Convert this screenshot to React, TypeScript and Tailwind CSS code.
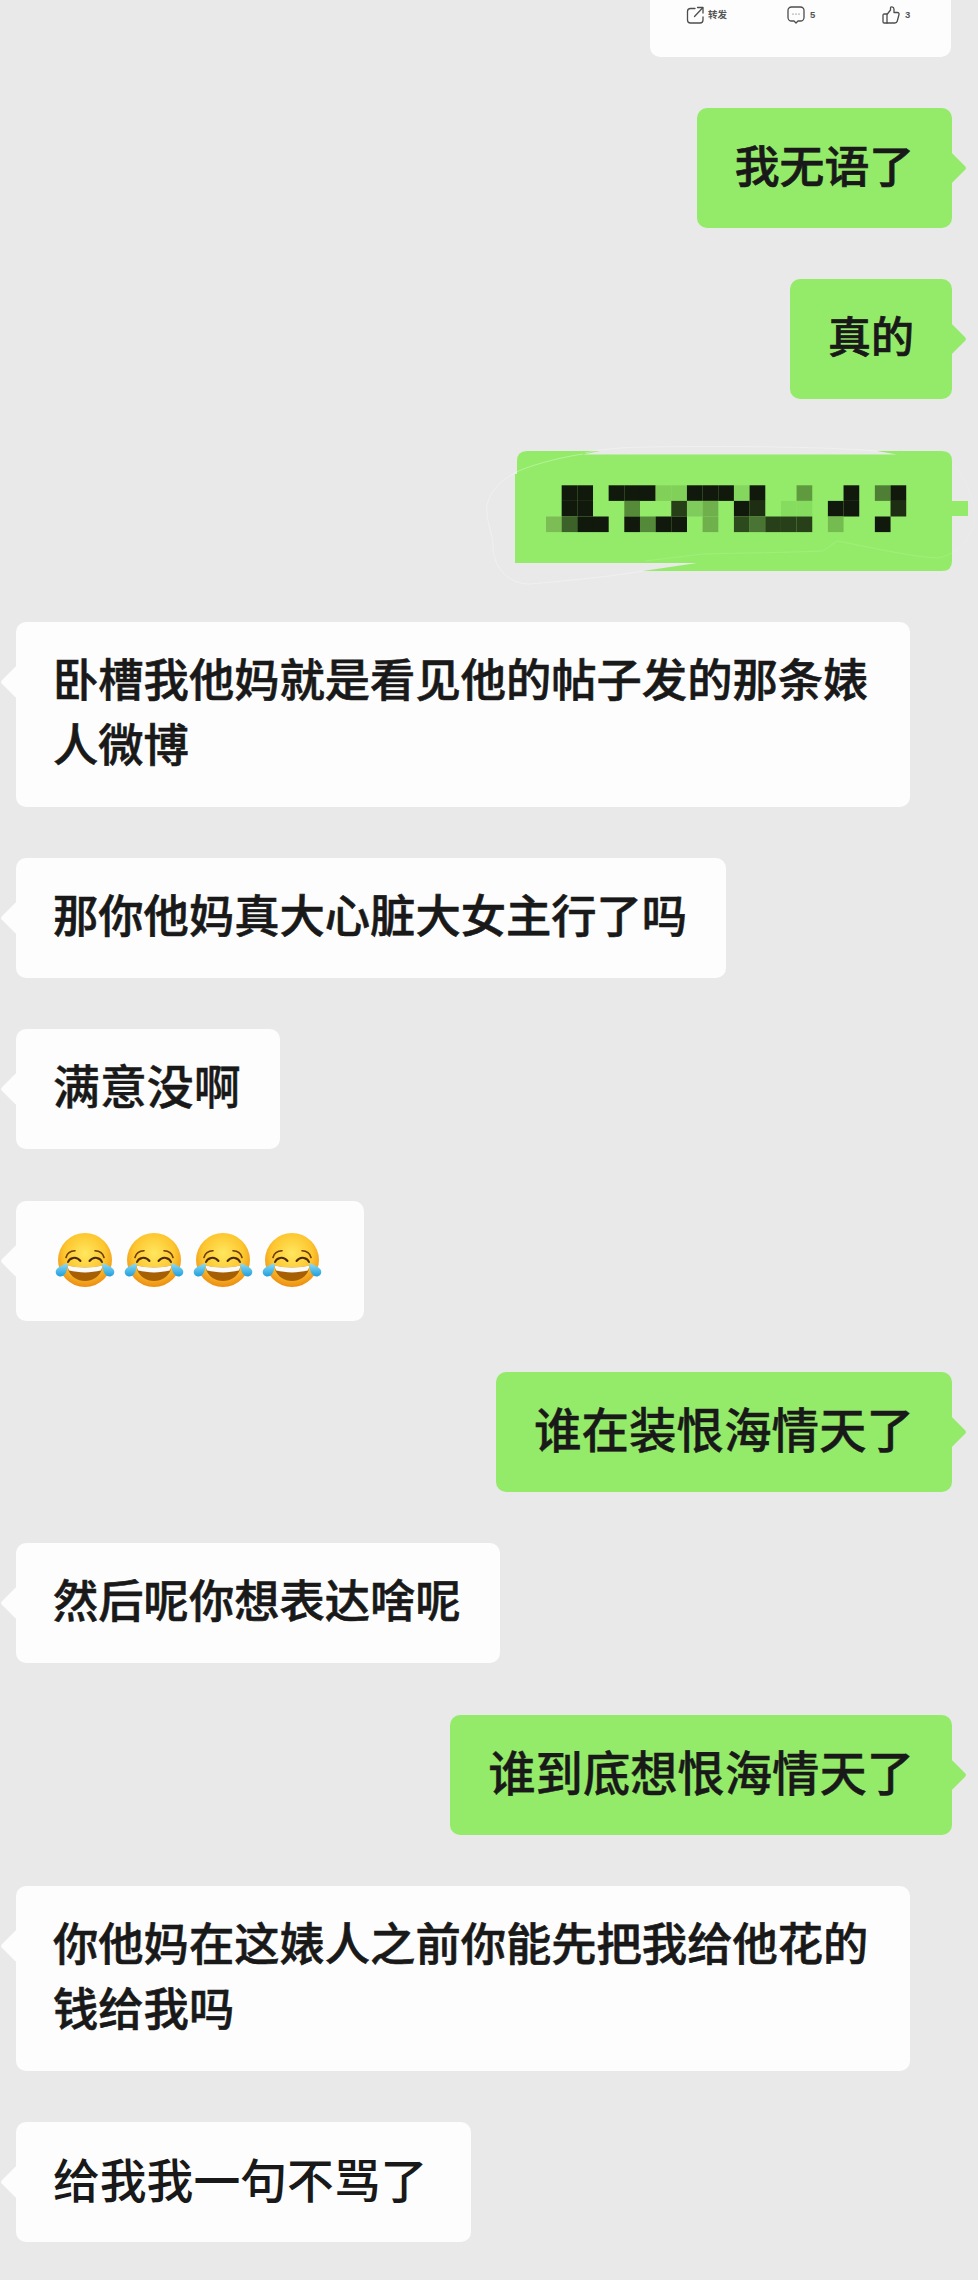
import React from "react";

const FONT = "font-['Noto_Sans_CJK_SC','Noto_Sans',sans-serif]";

// mosaic cells of the censored message: [col, row, colour]
const DARK = "#11180c";
const MOSAIC: [number, number, string][] = [
  [1, 0, DARK], [2, 0, DARK], [4, 0, DARK], [5, 0, DARK], [6, 0, DARK],
  [7, 0, "#81d05a"], [8, 0, "#81d05a"], [9, 0, DARK], [10, 0, DARK], [11, 0, DARK],
  [12, 0, "#85d65f"], [13, 0, DARK], [16, 0, "#5f9a3f"], [19, 0, DARK],
  [21, 0, "#4f7f35"], [22, 0, DARK],
  [1, 1, DARK], [2, 1, DARK], [5, 1, "#558a38"], [8, 1, "#263f17"],
  [9, 1, "#7fcc5c"], [10, 1, "#6fb04c"], [12, 1, DARK], [13, 1, "#1d2e12"],
  [15, 1, "#86dc5f"], [16, 1, "#86dc5f"], [18, 1, DARK], [19, 1, DARK], [22, 1, "#1d2e12"],
  [0, 2, "#7dbd55"], [1, 2, "#3c6129"], [2, 2, DARK], [3, 2, DARK], [5, 2, DARK],
  [6, 2, "#55893a"], [7, 2, DARK], [8, 2, DARK], [10, 2, "#6fb04c"],
  [12, 2, "#2d4a1e"], [13, 2, "#4a7433"], [14, 2, "#28401a"], [15, 2, "#28401a"],
  [16, 2, "#28401a"], [18, 2, "#74bc50"], [21, 2, DARK],
];

type BubbleProps = { text?: string; mine?: boolean; size?: string; children?: React.ReactNode };

const Bubble = ({ text, mine, size = "text-[45.3px] [-webkit-text-stroke:0.6px_#191919]", children }: BubbleProps) => (
  <div className={mine ? "flex justify-end pr-[26px]" : "flex justify-start pl-[16px]"}>
    <div
      className={
        mine
          ? "relative max-w-[894px] rounded-[10px] bg-[#94eb6a] px-[38px] pt-[23px] pb-[32px]"
          : "relative max-w-[894px] rounded-[10px] bg-[#fdfdfd] pt-[23px] pr-[39px] pb-[32px] pl-[37px]"
      }
    >
      <span
        className={
          mine
            ? "absolute top-[48px] right-[-10px] h-[24px] w-[24px] rotate-45 rounded-[3px] bg-[#94eb6a]"
            : "absolute top-[48px] left-[-11px] h-[24px] w-[24px] rotate-45 rounded-[3px] bg-[#fdfdfd]"
        }
      />
      {text ? (
        <p className={`relative ${size} leading-[65px] font-medium text-[#191919] ${FONT}`}>{text}</p>
      ) : (
        children
      )}
    </div>
  </div>
);

const LaughEmoji = () => (
  <svg width="60" height="60" viewBox="0 0 60 60" fill="none">
    <defs>
      <radialGradient id="face" cx="50%" cy="38%" r="62%">
        <stop offset="0%" stopColor="#ffe75e" />
        <stop offset="62%" stopColor="#fdc62f" />
        <stop offset="100%" stopColor="#ec8d12" />
      </radialGradient>
      <linearGradient id="tear" x1="0" y1="0" x2="0" y2="1">
        <stop offset="0%" stopColor="#8fdcf7" />
        <stop offset="100%" stopColor="#1f9fdc" />
      </linearGradient>
    </defs>
    <circle cx="30" cy="30" r="27" fill="url(#face)" />
    <path d="M11 27.5C12 23.5 15.5 21 20 20.8" stroke="#6b3d08" strokeWidth="1.6" strokeLinecap="round" />
    <path d="M49 27.5C48 23.5 44.5 21 40 20.8" stroke="#6b3d08" strokeWidth="1.6" strokeLinecap="round" />
    <path d="M13 32C14.5 28 21 25.5 25.5 31" stroke="#4a2a06" strokeWidth="2" strokeLinecap="round" />
    <path d="M47 32C45.5 28 39 25.5 34.5 31" stroke="#4a2a06" strokeWidth="2" strokeLinecap="round" />
    <path d="M12.5 35.5C22 38 38 38 47.5 35.5C47 45 39 51 30 51C21 51 13 45 12.5 35.5Z" fill="#a75f04" />
    <path d="M12.5 35.5C22 38 38 38 47.5 35.5C47.2 37.5 46.6 39.3 45.8 40.6C36 43 24 43 14.2 40.6C13.4 39.3 12.8 37.5 12.5 35.5Z" fill="#fafafa" />
    <path d="M12.5 33C13 37 11.5 46.5 5.5 46.5C1.5 46.5 -0.5 42.5 1.5 39.5C3.5 36.5 9 34.5 12.5 33Z" fill="url(#tear)" />
    <path d="M47.5 33C47 37 48.5 46.5 54.5 46.5C58.5 46.5 60.5 42.5 58.5 39.5C56.5 36.5 51 34.5 47.5 33Z" fill="url(#tear)" />
  </svg>
);

const CensoredBubble = () => (
  <div className="flex justify-end pr-[10px]">
    <svg width="453" height="120" viewBox="0 0 453 120" className="overflow-visible">
      <path
        d="M2 10Q2 0 12 0L85 0L68 3.5L382 3.5L362 0L427 0Q437 0 437 10L437 50L453 50L453 65L437 65L437 110Q437 120 427 120L128 120L182 112L0 112L0 23L2 23Z"
        fill="#94eb6a"
      />
      <g stroke="#ffffff" strokeOpacity="0.4" strokeWidth="0.8" fill="none">
        <path d="M68 3C35 8 5 18 -2 23C-20 33 -30 48 -28 62C-27 75 -22 85 -22 95C-22 115 -8 133 15 133C50 130 100 125 128 120" />
        <path d="M70 2C90 -3 120 -4 135 -4C190 -5 300 -5 362 0" />
        <path d="M437 13C455 30 462 60 458 77C450 95 437 105 422 107C390 105 350 95 322 90L308 100C260 102 220 102 188 103L130 110" strokeOpacity="0.15" />
      </g>
      {MOSAIC.map(([col, row, color]) => (
        <rect key={`${col}-${row}`} x={31 + col * 15.66} y={34.3 + row * 15.6} width="15.7" height="15.6" fill={color} />
      ))}
    </svg>
  </div>
);

const CardTop = () => (
  <div className="flex justify-end pr-[27px]">
    <div className="flex h-[56.7px] w-[301px] rounded-b-[10px] bg-[#fdfdfd] pt-[6px] pl-[36px]">
      <div className="flex h-[18px] w-[101px] items-center gap-[3px]">
        <svg width="19" height="18" viewBox="0 0 19 18" fill="none" stroke="#4d4d4d" strokeWidth="1.3" strokeLinecap="round" strokeLinejoin="round">
          <path d="M9 2.5H4.5C2.8 2.5 1.5 3.8 1.5 5.5V14C1.5 15.7 2.8 17 4.5 17H14C15.7 17 17 15.7 17 14V11" />
          <path d="M8.5 10.5L16.5 2" />
          <path d="M11.5 1.5H17V7" />
        </svg>
        <span className={`text-[9.5px] leading-none font-bold text-[#555555] ${FONT}`}>转发</span>
      </div>
      <div className="flex h-[18px] w-[95px] items-center gap-[5px]">
        <svg width="18" height="18" viewBox="0 0 18 18" fill="none" stroke="#4d4d4d" strokeWidth="1.3" strokeLinejoin="round">
          <path d="M4.5 1H13.5C15.4 1 17 2.6 17 4.5V11.5C17 13.4 15.4 15 13.5 15H11L9 17L7 15H4.5C2.6 15 1 13.4 1 11.5V4.5C1 2.6 2.6 1 4.5 1Z" />
          <circle cx="6" cy="8" r="0.6" fill="#4d4d4d" stroke="none" />
          <circle cx="9" cy="8" r="0.6" fill="#4d4d4d" stroke="none" />
          <circle cx="12" cy="8" r="0.6" fill="#4d4d4d" stroke="none" />
        </svg>
        <span className="font-['Liberation_Sans',sans-serif] text-[9.5px] leading-none font-bold text-[#555555]">5</span>
      </div>
      <div className="flex h-[18px] items-center gap-[5px]">
        <svg width="18" height="18" viewBox="0 0 18 18" fill="none" stroke="#4d4d4d" strokeWidth="1.3" strokeLinejoin="round" strokeLinecap="round">
          <path d="M5 8H2.2C1.5 8 1 8.5 1 9.2V15.8C1 16.5 1.5 17 2.2 17H5" />
          <path d="M5 8.5L8.5 4V2C8.5 1.2 9.2 0.7 10 0.8C11.3 1 12 2 12 3.2V6.5H15.5C16.6 6.5 17.3 7.5 17 8.5L15.3 15C15 16.2 14 17 12.8 17H5V8.5Z" />
        </svg>
        <span className="font-['Liberation_Sans',sans-serif] text-[9.5px] leading-none font-bold text-[#555555]">3</span>
      </div>
    </div>
  </div>
);

const App = () => {
  return (
    <div className="flex h-[2280px] w-[978px] flex-col gap-[51.3px] overflow-hidden bg-[#e9e9e9]">
      <CardTop />
      <Bubble mine size="text-[44.8px] [-webkit-text-stroke:0.7px_#191919]" text="我无语了" />
      <Bubble mine size="text-[43px] [-webkit-text-stroke:0.7px_#191919]" text="真的" />
      <CensoredBubble />
      <Bubble text="卧槽我他妈就是看见他的帖子发的那条婊人微博" />
      <Bubble text="那你他妈真大心脏大女主行了吗" />
      <Bubble size="text-[46.9px] [-webkit-text-stroke:0.4px_#191919]" text="满意没啊" />
      <Bubble>
        <div className="relative mt-[4px] mr-[3px] mb-[-4px] ml-[2px] flex h-[65px] items-center gap-[9px]">
          <LaughEmoji />
          <LaughEmoji />
          <LaughEmoji />
          <LaughEmoji />
        </div>
      </Bubble>
      <Bubble mine size="text-[47.5px] [-webkit-text-stroke:0.4px_#191919]" text="谁在装恨海情天了" />
      <Bubble text="然后呢你想表达啥呢" />
      <Bubble mine size="text-[47.3px] [-webkit-text-stroke:0.4px_#191919]" text="谁到底想恨海情天了" />
      <Bubble text="你他妈在这婊人之前你能先把我给他花的钱给我吗" />
      <Bubble size="text-[46.8px] pr-[5px]" text="给我我一句不骂了" />
    </div>
  );
};

export default App;
